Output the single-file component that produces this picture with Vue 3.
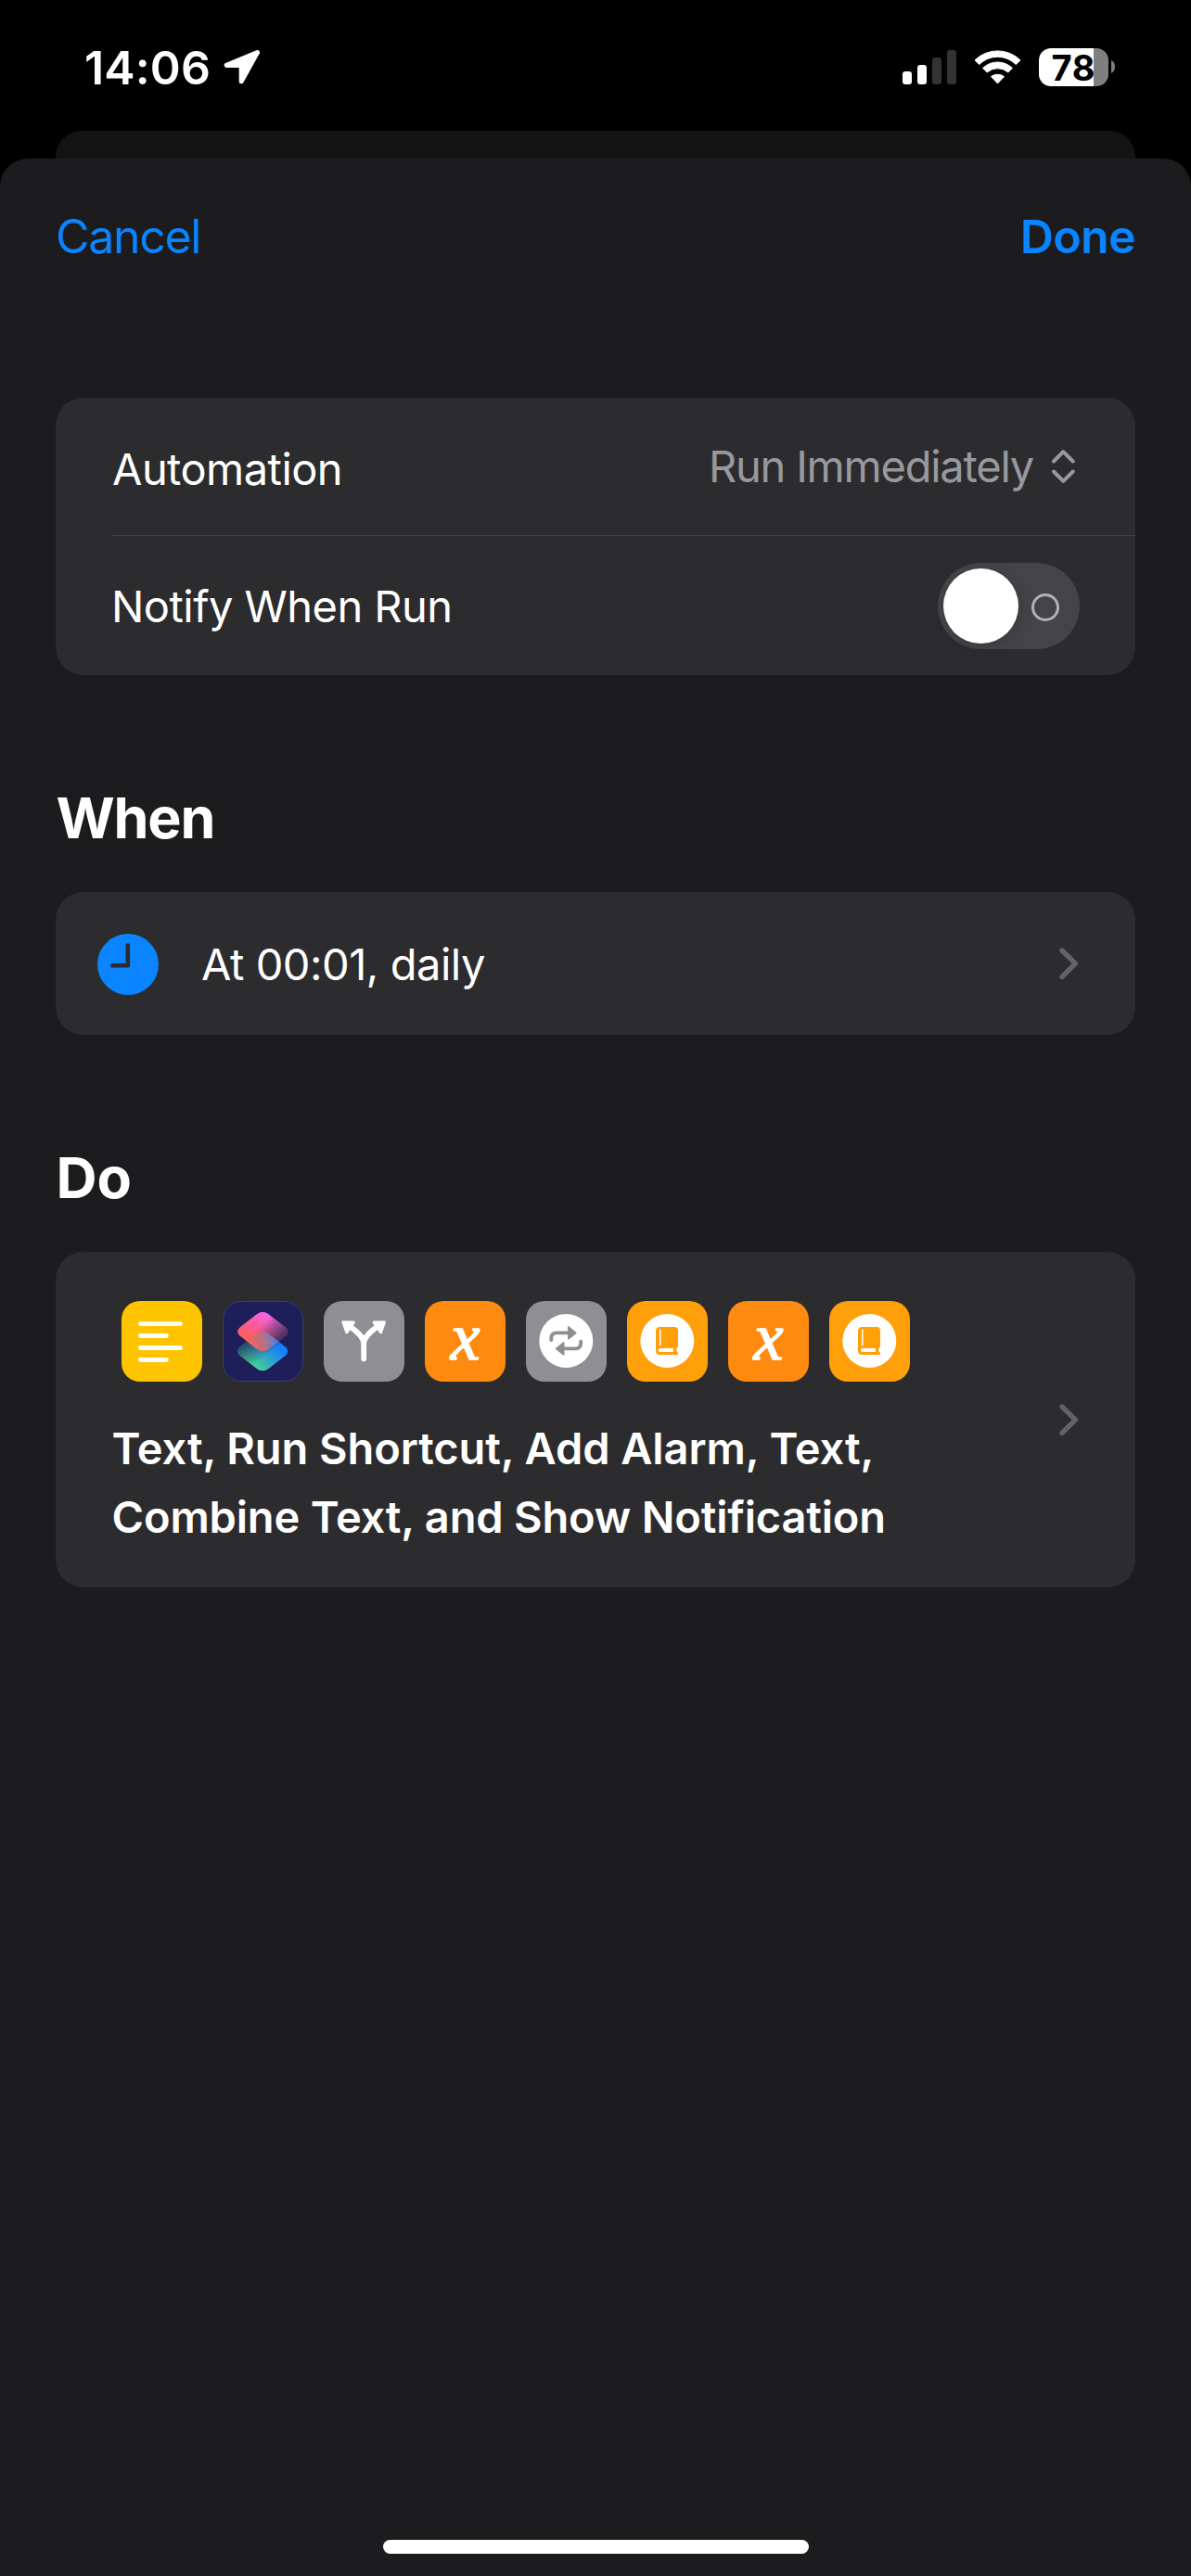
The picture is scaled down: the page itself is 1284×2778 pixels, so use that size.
<script setup>
const actions = ['text', 'shortcut', 'branch', 'variable', 'repeat', 'book', 'variable', 'book']
</script>

<template>
  <div class="screen">
    <header class="status">
      <span class="time">14:06</span>
      <svg class="location" width="42" height="42" viewBox="0 0 42 42">
        <path d="M37.5 4.5 4.2 18.4H20.2V35.8Z" fill="#fff" stroke="#fff" stroke-width="5" stroke-linejoin="round" />
      </svg>
      <svg class="signal" width="58" height="37" viewBox="0 0 58 37">
        <rect x="0" y="23" width="10" height="14" rx="3" fill="#fff" />
        <rect x="16" y="16" width="10" height="21" rx="3" fill="#fff" />
        <rect x="32" y="8" width="10" height="29" rx="3" fill="#333" />
        <rect x="48" y="0" width="10" height="37" rx="3" fill="#333" />
      </svg>
      <svg class="wifi" width="51" height="37" viewBox="0 0 51 37">
        <g fill="#fff" stroke="#fff" stroke-width="1" stroke-linejoin="round">
          <path d="M1 10.9A35 35 0 0 1 50 10.9L45.3 15.5A28 28 0 0 0 5.7 15.5Z" />
          <path d="M9.6 19.4A23 23 0 0 1 41.4 19.4L36.8 24A17 17 0 0 0 14.2 24Z" />
          <path d="M18.5 28.6A11.5 11.5 0 0 1 32.5 28.6L25.5 36Z" />
        </g>
      </svg>
      <div class="battery"><span>78</span></div>
      <svg class="nub" width="4" height="14" viewBox="0 0 4 14"><path d="M0 0Q4 2 4 7T0 14Z" fill="#7f7f7f" /></svg>
    </header>

    <div class="behind"></div>

    <main class="sheet">
      <nav class="nav">
        <span class="cancel">Cancel</span>
        <span class="done">Done</span>
      </nav>

      <section class="card settings">
        <div class="row">
          <span class="label automation">Automation</span>
          <span class="picker">
            <span class="value">Run Immediately</span>
            <svg width="26" height="38" viewBox="0 0 26 38">
              <path d="M3 13.5 13.3 3.2 23.7 13.5M3 24.5 13.3 34.8 23.7 24.5" fill="none" stroke="#98989f" stroke-width="4" stroke-linecap="round" stroke-linejoin="round" />
            </svg>
          </span>
        </div>
        <div class="divider"></div>
        <div class="row second">
          <span class="label notify">Notify When Run</span>
          <div class="toggle"><i class="knob"></i><i class="ring"></i></div>
        </div>
      </section>

      <h2 class="when-title">When</h2>
      <section class="card trigger">
        <svg class="clock" width="66" height="66" viewBox="0 0 66 66">
          <circle cx="33" cy="33" r="33" fill="#0a84ff" />
          <path d="M32.8 12.6V34.2H16.2" fill="none" stroke="#2c2c2e" stroke-width="4.6" stroke-linecap="round" stroke-linejoin="round" />
        </svg>
        <span class="label schedule">At 00:01, daily</span>
        <svg class="chevron" width="22" height="36" viewBox="0 0 22 36">
          <path d="M3 4 17.4 18.2 3 32.4" fill="none" stroke="#636366" stroke-width="5.4" stroke-linecap="round" stroke-linejoin="round" />
        </svg>
      </section>

      <h2 class="do-title">Do</h2>
      <section class="card do">
        <div class="content">
          <div class="icons">
            <template v-for="(a, i) in actions" :key="i">
              <div class="app" :class="a">
                <svg v-if="a === 'text'" width="87" height="87" viewBox="0 0 87 87">
                  <path d="M20.5 24.6H63.5M20.5 37.5H48.3M20.5 50.5H63.5M20.5 63.5H48.3" stroke="#fff" stroke-width="4.9" stroke-linecap="round" />
                </svg>
                <svg v-else-if="a === 'shortcut'" width="87" height="87" viewBox="0 0 87 87">
                  <defs>
                    <linearGradient id="low" x1="0.25" y1="0.8" x2="0.8" y2="0.35">
                      <stop offset="0" stop-color="#46d296" />
                      <stop offset="0.4" stop-color="#34aebd" />
                      <stop offset="1" stop-color="#1280ff" />
                    </linearGradient>
                    <linearGradient id="lowShade" x1="0.05" y1="0.2" x2="0.5" y2="0.7">
                      <stop offset="0.1" stop-color="#242a5c" stop-opacity="0.9" />
                      <stop offset="1" stop-color="#242a5c" stop-opacity="0" />
                    </linearGradient>
                    <linearGradient id="high" x1="0.25" y1="0.75" x2="0.6" y2="0.1">
                      <stop offset="0" stop-color="#ff5f50" />
                      <stop offset="0.5" stop-color="#fa5a96" />
                      <stop offset="1" stop-color="#f765dc" />
                    </linearGradient>
                    <linearGradient id="highShade" x1="0.5" y1="0.3" x2="0.95" y2="0.6">
                      <stop offset="0" stop-color="#3a2c60" stop-opacity="0" />
                      <stop offset="1" stop-color="#3a2c60" stop-opacity="0.95" />
                    </linearGradient>
                    <linearGradient id="mix" x1="0" y1="0.6" x2="1" y2="0.4">
                      <stop offset="0" stop-color="#fa5f58" />
                      <stop offset="0.5" stop-color="#bd7080" />
                      <stop offset="1" stop-color="#3f84ee" />
                    </linearGradient>
                    <clipPath id="lowClip">
                      <path d="M36.5 35.6Q43.2 30.5 49.9 35.6L67.3 49.2Q73.2 54.2 67.3 59.2L49.9 72.8Q43.2 77.9 36.5 72.8L19.1 59.2Q13.2 54.2 19.1 49.2Z" />
                    </clipPath>
                  </defs>
                  <rect x="0.5" y="0.5" width="86" height="86" rx="20" fill="none" stroke="#41415f" />
                  <path fill="url(#low)" d="M36.5 35.6Q43.2 30.5 49.9 35.6L67.3 49.2Q73.2 54.2 67.3 59.2L49.9 72.8Q43.2 77.9 36.5 72.8L19.1 59.2Q13.2 54.2 19.1 49.2Z" />
                  <path fill="url(#lowShade)" d="M36.5 35.6Q43.2 30.5 49.9 35.6L67.3 49.2Q73.2 54.2 67.3 59.2L49.9 72.8Q43.2 77.9 36.5 72.8L19.1 59.2Q13.2 54.2 19.1 49.2Z" />
                  <path fill="url(#high)" d="M36.5 14.4Q43.2 9.3 49.9 14.4L67.3 28Q73.2 33 67.3 38L49.9 51.6Q43.2 56.7 36.5 51.6L19.1 38Q13.2 33 19.1 28Z" />
                  <path fill="url(#highShade)" d="M36.5 14.4Q43.2 9.3 49.9 14.4L67.3 28Q73.2 33 67.3 38L49.9 51.6Q43.2 56.7 36.5 51.6L19.1 38Q13.2 33 19.1 28Z" />
                  <path clip-path="url(#lowClip)" fill="url(#mix)" d="M43.2 30 61 43.1 49.9 51.6Q43.2 56.7 36.5 51.6L25.5 43.1Z" />
                </svg>
                <svg v-else-if="a === 'branch'" width="87" height="87" viewBox="0 0 87 87">
                  <g fill="none" stroke="#fff" stroke-width="5.8" stroke-linecap="round">
                    <path d="M43.2 62.3V46C43.2 38 33 31 27 26.5" />
                    <path d="M43.2 46C43.2 38 53.4 31 59.4 26.5" />
                  </g>
                  <g fill="#fff" stroke="#fff" stroke-width="3" stroke-linejoin="round">
                    <path d="M20.8 22.8 32.4 22.9 24.8 33.8Z" />
                    <path d="M65.6 22.8 54 22.9 61.6 33.8Z" />
                  </g>
                </svg>
                <span v-else-if="a === 'variable'" class="x">x</span>
                <svg v-else-if="a === 'repeat'" width="87" height="87" viewBox="0 0 87 87">
                  <circle cx="43.3" cy="43" r="29" fill="#fff" />
                  <g fill="none" stroke="#8e8e93" stroke-width="3.9" stroke-linecap="round">
                    <path d="M27.3 42V40.3Q27.3 34.4 33.2 34.4H46" />
                    <path d="M59.2 43.8V45.5Q59.2 51.4 53.3 51.4H40.5" />
                  </g>
                  <g fill="#8e8e93" stroke="#8e8e93" stroke-width="2" stroke-linejoin="round">
                    <path d="M46 28.2V40.6L53.6 34.4Z" />
                    <path d="M40.5 45.2V57.6L32.9 51.4Z" />
                  </g>
                </svg>
                <svg v-else width="87" height="87" viewBox="0 0 87 87">
                  <circle cx="43.3" cy="43" r="29" fill="#fff" />
                  <path d="M35.4 28H51Q55 28 55 32V49Q53.2 50.6 53.2 52.8T55 56V58H35.4Q31 58 31 53.6V32.4Q31 28 35.4 28Z" fill="#ff9f0a" />
                  <path d="M35.7 31.2V47.6" stroke="#fff" stroke-width="1.6" stroke-linecap="round" />
                  <path d="M35.8 51H50Q49.4 53 50 55H35.8A2 2 0 0 1 35.8 51Z" fill="#fff" />
                </svg>
              </div>
            </template>
          </div>
          <p class="summary">
            <span class="first">Text, Run Shortcut, Add Alarm, Text,</span><br />
            <span>Combine Text, and Show Notification</span>
          </p>
        </div>
        <svg class="chevron" width="22" height="36" viewBox="0 0 22 36">
          <path d="M3 4 17.4 18.2 3 32.4" fill="none" stroke="#636366" stroke-width="5.4" stroke-linecap="round" stroke-linejoin="round" />
        </svg>
      </section>

      <div class="home"></div>
    </main>
  </div>
</template>

<style>
body {
  background: #000;
}
</style>

<style scoped>
.screen {
  box-sizing: border-box;
  width: 1284px;
  height: 2778px;
  display: flex;
  flex-direction: column;
  overflow: hidden;
  background: #000;
  color: #fff;
  font-family: Inter, "Liberation Sans", sans-serif;
}
svg {
  display: block;
  flex: none;
}
.status {
  display: flex;
  align-items: flex-start;
  height: 141px;
  flex: none;
  padding-left: 91px;
}
.time {
  width: 149px;
  margin-top: 43px;
  font-size: 50px;
  font-weight: 600;
  line-height: 60px;
  letter-spacing: 0.15px;
}
.location {
  margin-top: 52px;
}
.signal {
  margin: 54px 0 0 691px;
}
.wifi {
  margin: 54px 0 0 19px;
}
.battery {
  width: 75px;
  height: 41px;
  margin: 52px 0 0 19px;
  border-radius: 13px;
  background: linear-gradient(90deg, #fff 59px, #7f7f7f 59px);
  color: #000;
}
.battery span {
  display: block;
  padding-left: 13.5px;
  font-size: 38px;
  font-weight: 650;
  line-height: 42px;
  letter-spacing: 0.8px;
}
.nub {
  margin: 65px 0 0 3px;
}
.behind {
  height: 30px;
  flex: none;
  margin: 0 60px;
  border-radius: 28px 28px 0 0;
  background: #131313;
}
.sheet {
  flex: 1;
  display: flex;
  flex-direction: column;
  border-radius: 30px 30px 0 0;
  background: #1c1c1e;
}
.nav {
  display: flex;
  justify-content: space-between;
  height: 204px;
  padding: 54px 60px 0 60px;
  font-size: 50px;
  line-height: 60px;
  color: #0a84ff;
}
.cancel {
  letter-spacing: -1.3px;
}
.done {
  font-weight: 600;
  letter-spacing: -0.6px;
}
.card {
  box-sizing: border-box;
  margin: 0 60px;
  border-radius: 30px;
  background: #2c2c2e;
}
.label {
  font-size: 47px;
  line-height: 60px;
}
.settings {
  height: 299px;
}
.row {
  display: flex;
  align-items: center;
  justify-content: space-between;
  height: 148px;
  padding: 0 60px 0 61px;
}
.automation {
  padding-top: 6px;
  letter-spacing: -0.55px;
}
.picker {
  display: flex;
  align-items: center;
  gap: 19px;
  padding-right: 5px;
}
.value {
  font-size: 47px;
  line-height: 60px;
  letter-spacing: -1.22px;
  color: #98989f;
}
.divider {
  height: 1px;
  margin-left: 60px;
  background: #414144;
}
.second {
  height: 150px;
  padding-left: 60px;
}
.notify {
  padding-top: 2px;
  letter-spacing: -0.55px;
}
.toggle {
  display: flex;
  align-items: center;
  gap: 14px;
  box-sizing: border-box;
  width: 153px;
  height: 93px;
  padding-left: 6px;
  border-radius: 47px;
  background: #444348;
  margin-top: 1px;
}
.knob {
  width: 81px;
  height: 81px;
  border-radius: 50%;
  background: #fff;
  box-shadow: 3px 4px 16px rgba(0, 0, 0, 0.12);
}
.ring {
  box-sizing: border-box;
  width: 30px;
  height: 30px;
  margin-top: 3px;
  border: 3px solid #b2b2b2;
  border-radius: 50%;
}
h2 {
  margin: 0;
  font-size: 61px;
  font-weight: 700;
  line-height: 80px;
}
.when-title {
  padding: 114px 0 40px 60.5px;
  letter-spacing: -1.2px;
}
.do-title {
  padding: 114px 0 40px 60.5px;
}
.trigger {
  display: flex;
  align-items: center;
  height: 154px;
  padding: 0 60px 0 45px;
}
.clock {
  margin-top: 2px;
}
.schedule {
  flex: 1;
  margin-left: 46px;
  padding-top: 2px;
  letter-spacing: -0.48px;
}
.do {
  display: flex;
  align-items: center;
  justify-content: space-between;
  height: 362px;
  padding: 0 60px 0 61px;
}
.content {
  align-self: flex-start;
}
.icons {
  display: flex;
  gap: 22px;
  padding: 53px 0 0 10px;
}
.app {
  width: 87px;
  height: 87px;
  border-radius: 20px;
}
.text {
  background: #ffc400;
}
.shortcut {
  background: #1d1e5a;
}
.branch,
.repeat {
  background: #8e8e93;
}
.variable {
  display: flex;
  justify-content: center;
  background: #ff8a10;
}
.book {
  background: #ff9f0a;
}
.x {
  font-family: "Liberation Serif", serif;
  font-size: 72px;
  font-style: italic;
  line-height: 79px;
  -webkit-text-stroke: 1.6px #fff;
}
.summary {
  margin: 35px 0 0 -0.5px;
  font-size: 47px;
  font-weight: 600;
  line-height: 74px;
  letter-spacing: -0.17px;
  white-space: nowrap;
}
.first {
  letter-spacing: -0.07px;
}
.home {
  width: 459px;
  height: 15px;
  margin: auto 0 24px 413px;
  border-radius: 8px;
  background: #fff;
}
</style>
